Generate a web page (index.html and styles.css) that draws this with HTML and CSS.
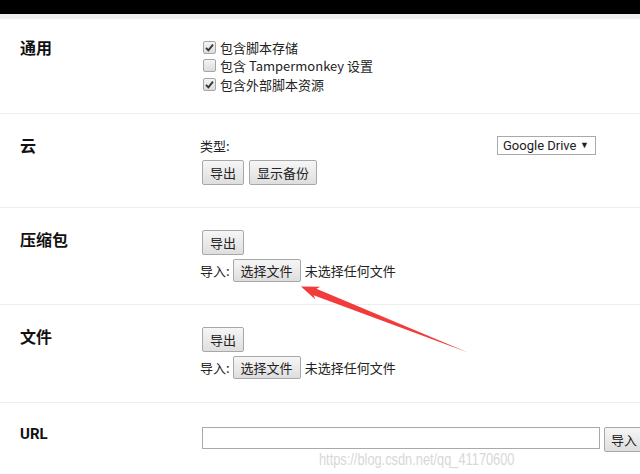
FILE: index.html
```html
<!DOCTYPE html>
<html lang="zh">
<head>
  <meta charset="UTF-8">
  <title>Tampermonkey 工具</title>
  <link rel="stylesheet" href="styles.css">
</head>
<body>

  <div class="topbar"></div>
  <div class="topstrip"></div>

  <section class="row first">
    <h3 class="label">通用</h3>
    <div class="content">
      <label class="check"><span class="box checked"><svg viewBox="0 0 13 13" width="13" height="13"><path d="M3 6.8 L5.4 9.4 L10 3.6" fill="none" stroke="#333" stroke-width="1.8"/></svg></span>包含脚本存储</label>
      <label class="check"><span class="box"></span>包含 Tampermonkey 设置</label>
      <label class="check"><span class="box checked"><svg viewBox="0 0 13 13" width="13" height="13"><path d="M3 6.8 L5.4 9.4 L10 3.6" fill="none" stroke="#333" stroke-width="1.8"/></svg></span>包含外部脚本资源</label>
    </div>
  </section>

  <section class="row">
    <h3 class="label">云</h3>
    <div class="content">
      <div class="line type-line">
        <span>类型:</span>
        <div class="select">Google Drive <span class="caret">▼</span></div>
      </div>
      <div class="btns">
        <button class="btn">导出</button>
        <button class="btn">显示备份</button>
      </div>
    </div>
  </section>

  <section class="row">
    <h3 class="label">压缩包</h3>
    <div class="content">
      <div class="btns spaced"><button class="btn">导出</button></div>
      <div class="import">
        <span>导入:</span>
        <button class="btn file">选择文件</button>
        <span>未选择任何文件</span>
      </div>
    </div>
  </section>

  <section class="row files">
    <h3 class="label">文件</h3>
    <div class="content">
      <div class="btns spaced"><button class="btn">导出</button></div>
      <div class="import">
        <span>导入:</span>
        <button class="btn file">选择文件</button>
        <span>未选择任何文件</span>
      </div>
    </div>
  </section>

  <section class="row url-row">
    <h3 class="label url-label">URL</h3>
    <div class="content url-line">
      <input type="text" class="url-input">
      <button class="btn url-btn">导入</button>
    </div>
  </section>

  <div class="watermark">https://blog.csdn.net/qq_41170600</div>

  <svg class="arrow" width="640" height="474" viewBox="0 0 640 474">
    <polygon points="301,286.5 315.4,299.5 313.6,295.2 468,352.5 316.4,288.8 320.3,286.8" fill="#f23c3c"/>
  </svg>

</body>
</html>
```

FILE: styles.css
```css
body {
  margin: 0;
  width: 640px;
  height: 474px;
  overflow: hidden;
  position: relative;
  background: #fff;
  color: #222;
  font-family: "Liberation Sans", "Noto Sans CJK SC", sans-serif;
  font-size: 13px;
}

.topbar {
  height: 14px;
  background: #000;
}

.topstrip {
  height: 5px;
  background: #efefed;
}

.row {
  display: grid;
  grid-template-columns: 180px 440px;
  padding: 22px 0 22px 20px;
  border-top: 1px solid #eeeeee;
}

.row.first {
  border-top: none;
  padding-top: 19px;
  padding-bottom: 19px;
}

.row.files {
  padding-bottom: 23px;
}

.row.url-row {
  padding-top: 24px;
}

.label {
  margin: 0;
  font-family: "Noto Sans CJK SC", sans-serif;
  font-size: 16px;
  font-weight: bold;
  line-height: 18px;
  color: #111;
}

.url-label {
  font-family: "Roboto", "Liberation Sans", sans-serif;
  font-size: 15px;
  line-height: 14px;
}

.content {
  font-family: "Noto Sans CJK SC", sans-serif;
}

.check {
  display: flex;
  align-items: center;
  height: 18.5px;
}

.box {
  display: inline-block;
  width: 11px;
  height: 11px;
  margin: 0 4px 0 3px;
  border: 1px solid #a6a6a6;
  border-radius: 2px;
  background: linear-gradient(#f4f4f4, #dcdcdc);
  position: relative;
}

.box svg {
  position: absolute;
  left: -1px;
  top: -1px;
}

.line {
  height: 19px;
  margin-bottom: 5px;
}

.type-line {
  display: flex;
  align-items: center;
  justify-content: space-between;
  width: 396px;
}

.select {
  height: 17px;
  border: 1px solid #a9a9a9;
  font-family: "Roboto", "Liberation Sans", sans-serif;
  font-size: 13px;
  line-height: 17px;
  color: #222;
  padding-left: 5px;
  width: 92px;
  position: relative;
}

.caret {
  position: absolute;
  right: 6px;
  top: 0;
  font-size: 9px;
}

.btns {
  display: flex;
  gap: 5px;
  padding-left: 2px;
}

.btns.spaced {
  margin-bottom: 4px;
}

.btn {
  height: 25px;
  padding: 0 7px;
  font-family: "Noto Sans CJK SC", sans-serif;
  font-size: 13px;
  color: #222;
  background: linear-gradient(#f6f6f6, #dedede);
  border: 1px solid #a8a8a8;
  border-radius: 2px;
  cursor: pointer;
}

.import {
  display: flex;
  align-items: center;
  height: 23px;
}

.btn.file {
  height: 23px;
  width: 68px;
  padding: 0;
  margin: 0 4px 0 3px;
}

.url-line {
  display: flex;
  align-items: flex-start;
  padding-left: 2px;
}

.url-input {
  flex-shrink: 0;
  width: 398px;
  height: 22px;
  box-sizing: border-box;
  border: 1px solid #a9a9a9;
  margin: 0;
}

.url-btn {
  margin-left: 4px;
  flex-shrink: 0;
  width: 44px;
  padding: 0 6px;
  text-align: left;
}

.watermark {
  position: absolute;
  left: 319px;
  top: 451px;
  font-family: "Liberation Sans", sans-serif;
  font-size: 16px;
  color: #d8d8d8;
  transform: scaleX(0.8);
  transform-origin: left top;
  white-space: nowrap;
}

.arrow {
  position: absolute;
  left: 0;
  top: 0;
}
```
